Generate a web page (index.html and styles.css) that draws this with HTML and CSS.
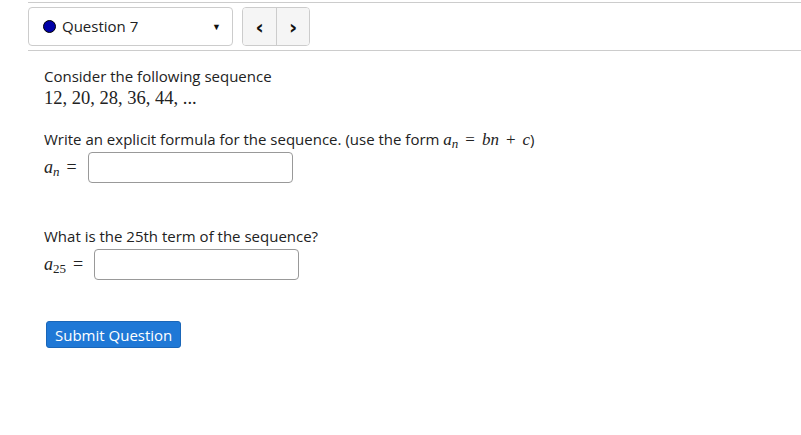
FILE: index.html
```html
<!DOCTYPE html>
<html lang="en">
<head>
  <meta charset="UTF-8" />
  <title>Question 7</title>
  <link rel="stylesheet" href="styles.css">
</head>
<body>

  <!-- Question navigation -->
  <div class="question-bar">
    <div class="question-select">
      <span class="status-dot"></span>
      <span class="question-label">Question 7</span>
      <span class="caret">&#9660;</span>
    </div>
    <div class="nav-buttons">
      <button class="nav-btn">&lsaquo;</button>
      <button class="nav-btn">&rsaquo;</button>
    </div>
  </div>

  <!-- Question body -->
  <div class="question-body">
    <p class="intro">Consider the following sequence</p>
    <p class="sequence math">12, 20, 28, 36, 44, ...</p>

    <p class="prompt">Write an explicit formula for the sequence. (use the form <span class="math"><i>a</i><sub><i>n</i></sub><span class="op">=</span><i>bn</i><span class="op">+</span><i>c</i></span>)</p>
    <div class="answer-row">
      <span class="math"><i>a</i><sub><i>n</i></sub><span class="op">=</span></span>
      <input type="text" class="answer-input" />
    </div>

    <p class="prompt second">What is the 25th term of the sequence?</p>
    <div class="answer-row">
      <span class="math"><i>a</i><sub>25</sub><span class="op">=</span></span>
      <input type="text" class="answer-input" />
    </div>

    <button class="submit-btn">Submit Question</button>
  </div>

</body>
</html>
```

FILE: styles.css
```css
* {
  margin: 0;
  padding: 0;
  box-sizing: border-box;
}

body {
  background: #fff;
  font-family: 'Open Sans', sans-serif;
  color: #222;
  padding-top: 2px;
}

/* Question navigation */
.question-bar {
  margin-left: 28px;
  border-top: 1px solid #ccc;
  border-bottom: 1px solid #ccc;
  padding: 4px 0;
  display: flex;
  gap: 9px;
}

.question-select {
  width: 205px;
  height: 39px;
  border: 1px solid #ccc;
  border-radius: 4px;
  display: flex;
  align-items: center;
  padding: 0 11px 1px 14px;
  font-size: 15px;
}

.status-dot {
  width: 13px;
  height: 13px;
  border-radius: 50%;
  background: #0000a8;
  border: 1px solid #000;
  margin-right: 6px;
}

.question-label {
  flex: 1;
}

.caret {
  font-size: 9px;
  color: #111;
}

.nav-buttons {
  display: flex;
  border: 1px solid #ccc;
  border-radius: 4px;
  overflow: hidden;
  height: 39px;
}

.nav-btn {
  width: 33px;
  background: #f5f5f5;
  border: none;
  font-size: 20px;
  font-weight: bold;
  font-family: 'DejaVu Sans', sans-serif;
  color: #111;
}

.nav-btn + .nav-btn {
  border-left: 1px solid #ccc;
}

/* Question body */
.question-body {
  padding: 15px 0 0 44px;
}

.math {
  font-family: 'Liberation Serif', serif;
  font-size: 18.5px;
}

.math sub {
  font-size: 13px;
  vertical-align: -3px;
  line-height: 0;
}

.math .op {
  margin: 0 7px;
}

.intro {
  font-size: 15px;
  line-height: 21px;
}

.sequence {
  line-height: 22px;
  margin-bottom: 20px;
}

.prompt {
  font-size: 15px;
  line-height: 21px;
}

.prompt .math {
  font-size: 17px;
}

.prompt.second {
  margin-top: 43px;
}

.answer-row {
  display: flex;
  align-items: center;
  gap: 4px;
  margin-top: 2px;
}

.answer-row .math {
  font-size: 18px;
}

.answer-input {
  width: 205px;
  height: 31px;
  border: 1px solid #999;
  border-radius: 4px;
}

.submit-btn {
  margin: 41px 0 0 2px;
  padding: 0 8px;
  height: 27px;
  background: #1f78d6;
  color: #fff;
  border: 1px solid #1a66b8;
  border-radius: 3px;
  font-family: 'Open Sans', sans-serif;
  font-size: 15px;
}
```
